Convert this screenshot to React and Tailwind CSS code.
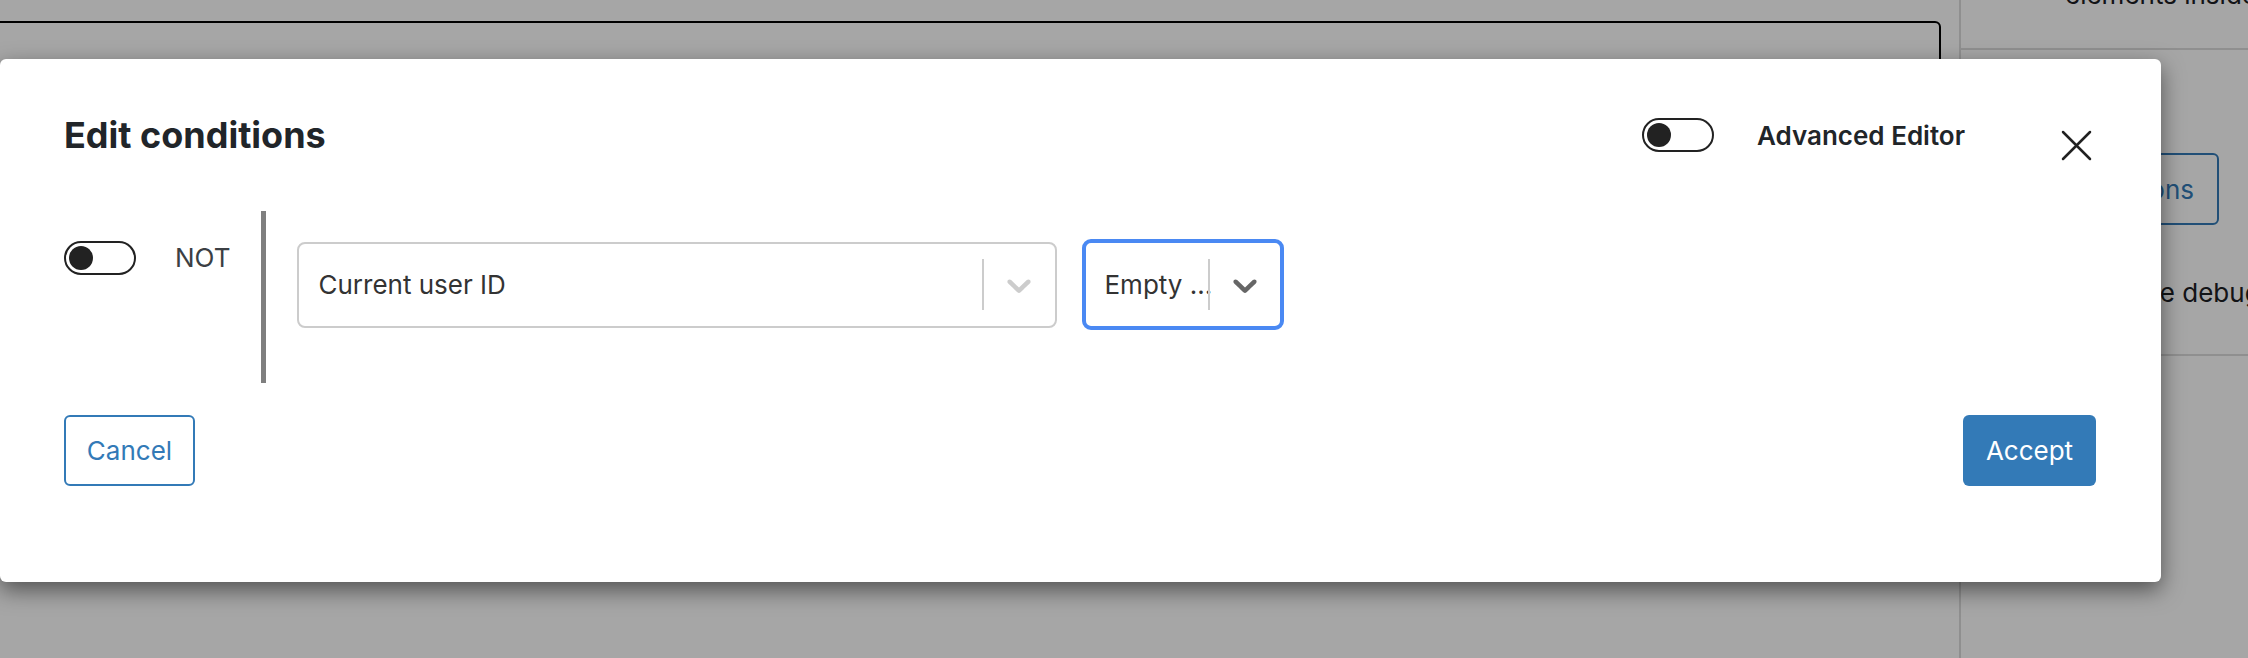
import React, { useState } from "react";

function Switch({ on, onToggle }) {
  return (
    <button
      type="button"
      onClick={onToggle}
      className="w-[72px] h-[34px] shrink-0 rounded-full border-[2.5px] border-[#222222] bg-white flex items-center px-[2.5px]"
    >
      <span
        className={
          "w-[24px] h-[24px] rounded-full bg-[#222222] transition-transform " +
          (on ? "translate-x-[38px]" : "translate-x-0")
        }
      />
    </button>
  );
}

function Chevron({ color }) {
  return (
    <svg width="40" height="40" viewBox="0 0 20 20" fill={color}>
      <path d="M4.516 7.548c0.436-0.446 1.043-0.481 1.576 0l3.908 3.747 3.908-3.747c0.533-0.481 1.141-0.446 1.574 0 0.436 0.445 0.408 1.197 0 1.615-0.406 0.418-4.695 4.502-4.695 4.502-0.217 0.223-0.502 0.335-0.787 0.335s-0.57-0.112-0.789-0.335c0 0-4.287-4.084-4.695-4.502s-0.436-1.17 0-1.615z" />
    </svg>
  );
}

export default function App() {
  const [advanced, setAdvanced] = useState(false);
  const [negate, setNegate] = useState(false);

  return (
    <div className="relative w-[2248px] h-[658px] overflow-hidden font-['Inter',sans-serif]">
      {/* page behind the dialog */}
      <div className="flex h-full bg-white">
        <main className="w-[1959px] shrink-0 pt-[21px] pr-[18px]">
          <div className="h-[320px] -ml-[10px] border-2 border-black rounded-[6px]" />
        </main>
        <aside className="flex-1 min-w-0 overflow-hidden border-l-2 border-[#dcdcdc] text-[26px] text-[#1d2024]">
          <div className="h-[50px] border-b-2 border-[#dcdcdc] overflow-hidden">
            <p className="-mt-[18px] pl-[104px] leading-[26px] whitespace-nowrap">elements inside</p>
          </div>
          <div className="h-[306px] border-b-2 border-[#dcdcdc] pr-[29px] flex flex-col">
            <div className="mt-[103px] flex justify-end">
              <button className="shrink-0 h-[72px] pl-[24px] pr-[23px] border-2 border-[#337ab7] rounded-[6px] text-[#337ab7] whitespace-nowrap">
                Edit conditions
              </button>
            </div>
            <p className="mt-[50px] pl-[131px] leading-[36px] whitespace-nowrap">Enable debug mode</p>
          </div>
        </aside>
      </div>

      {/* backdrop */}
      <div className="absolute inset-0 bg-black/35" />

      {/* dialog */}
      <div className="absolute left-0 top-[59px] w-[2161px] h-[523px] bg-white rounded-[6px] shadow-[0_8px_22px_rgba(0,0,0,0.5)] pl-[64px] pr-[65px] pt-[54px]">
        <div className="flex justify-between h-[44px]">
          <h1 className="text-[36px] leading-[44px] font-bold text-[#212529]">Edit conditions</h1>
          <div className="flex items-start">
            <div className="h-[44px] flex items-center">
              <Switch on={advanced} onToggle={() => setAdvanced(!advanced)} />
              <span className="ml-[43px] text-[26px] font-semibold text-[#212529] whitespace-nowrap">
                Advanced Editor
              </span>
            </div>
            <button className="ml-[91px] mt-[12px] w-[40px] h-[40px] flex items-center justify-center" aria-label="Close">
              <svg width="31" height="31" viewBox="0 0 31 31" stroke="#212121" strokeWidth="2.5" strokeLinecap="round">
                <path d="M2 2 L29 29 M29 2 L2 29" />
              </svg>
            </button>
          </div>
        </div>

        {/* condition row */}
        <div className="mt-[54px] flex items-start">
          <div className="mt-[30px] flex items-center h-[34px]">
            <Switch on={negate} onToggle={() => setNegate(!negate)} />
            <span className="ml-[39px] text-[26px] leading-[34px] text-[#3b3f44]">NOT</span>
          </div>
          <div className="ml-[31px] border-l-[5px] border-[#7f7f7f] pl-[31px] pt-[28px] pb-[53px] flex items-center">
            <div className="w-[760px] h-[86px] border-2 border-[#cccccc] rounded-[8px] flex items-center">
              <span className="flex-1 pl-[19px] text-[26px] text-[#333333]">Current user ID</span>
              <span className="w-[2px] h-[51px] bg-[#cccccc]" />
              <span className="pl-[15px] pr-[16px] flex">
                <Chevron color="#cccccc" />
              </span>
            </div>
            <div className="ml-[25px] w-[202px] h-[91px] border-4 border-[#4a89f3] rounded-[9px] flex items-center">
              <span className="w-[122px] pl-[18px] text-[26px] text-[#333333] whitespace-nowrap">
                Empty ...
              </span>
              <span className="w-[2px] h-[51px] bg-[#cccccc]" />
              <span className="pl-[15px] pr-[15px] flex">
                <Chevron color="#666666" />
              </span>
            </div>
          </div>
        </div>

        {/* footer */}
        <div className="mt-[32px] flex justify-between">
          <button className="w-[131px] h-[71px] border-2 border-[#337ab7] rounded-[6px] text-[26px] text-[#337ab7]">
            Cancel
          </button>
          <button className="w-[133px] h-[71px] bg-[#337ab7] rounded-[6px] text-[26px] text-white">
            Accept
          </button>
        </div>
      </div>
    </div>
  );
}
